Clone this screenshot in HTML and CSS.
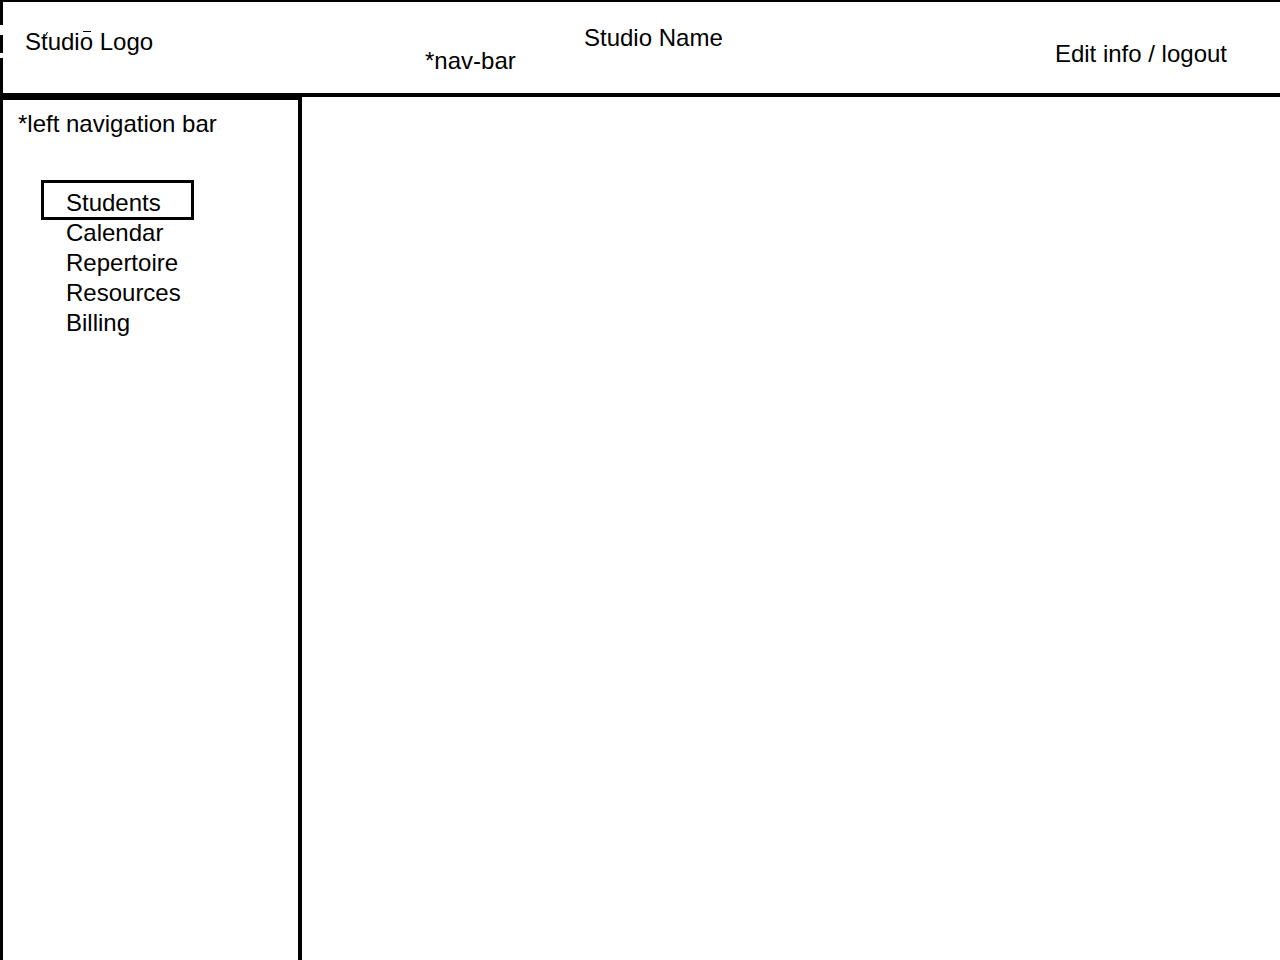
FILE: index.html
```html
<!DOCTYPE html>
<html lang="en">
<head>
    <meta charset="UTF-8">
    <meta name="viewport" content="width=device-width, initial-scale=1.0">
    <title>Studio Dashboard</title>
    <link rel="stylesheet" href="styles.css">
</head>
<body>
    <div class="header">
        <div class="logo">Studio Logo</div>
        <div class="nav-bar">
            <span class="nav-label">*nav-bar</span>
            <span class="studio-name">Studio Name</span>
        </div>
        <div class="account">Edit info / logout</div>
    </div>

    <div class="main">
        <div class="sidebar">
            <div class="sidebar-title">*left navigation bar</div>
            <ul class="side-nav">
                <li class="active">Students</li>
                <li>Calendar</li>
                <li>Repertoire</li>
                <li>Resources</li>
                <li>Billing</li>
            </ul>
        </div>
        <div class="content"></div>
    </div>
</body>
</html>
```

FILE: styles.css
```css
*, *::before, *::after {
    box-sizing: border-box;
}

body {
    margin: 0;
    height: 100vh;
    display: flex;
    flex-direction: column;
    background-color: #fff;
    color: #000;
    font-family: "Liberation Sans", Arial, sans-serif;
    font-size: 24px;
    line-height: 30px;
    overflow: hidden;
}

.header {
    height: 97px;
    flex-shrink: 0;
    display: flex;
    align-items: flex-start;
    border-top: 2px solid #000;
    border-bottom: 4px solid #000;
    /* broken left edge of the frame */
    background: linear-gradient(to bottom, #000 0 25px, transparent 25px 35px, #000 35px 53px, transparent 53px 58px, #000 58px) left top / 3px 100% no-repeat;
    background-origin: border-box;
}

.logo {
    position: relative;
    margin-top: 25px;
    padding-left: 25px;
    width: 425px;
}

/* stray marks left on the logo text */
.logo::before {
    content: "";
    position: absolute;
    left: 46px;
    top: 5px;
    width: 1px;
    height: 4px;
    background: #000;
    transform: skewX(-25deg);
}

.logo::after {
    content: "";
    position: absolute;
    left: 83px;
    top: 4px;
    width: 8px;
    height: 1px;
    background: #000;
}

.nav-bar {
    display: flex;
    align-items: flex-start;
    flex: 1;
}

.nav-label {
    margin-top: 44px;
    width: 159px;
}

.studio-name {
    margin-top: 21px;
}

.account {
    margin-top: 37px;
    padding-right: 53px;
}

.main {
    flex: 1;
    display: flex;
}

.sidebar {
    width: 302px;
    border-top: 3px solid #000;
    border-left: 3px solid #000;
    border-right: 4px solid #000;
    padding: 9px 0 0 15px;
}

.side-nav {
    list-style: none;
    margin: 49px 0 0;
    padding: 0 0 0 48px;
}

.side-nav li {
    position: relative;
}

.side-nav li.active::before {
    content: "";
    position: absolute;
    left: -25px;
    top: -8px;
    width: 153px;
    height: 40px;
    border: 3px solid #000;
}

.content {
    flex: 1;
}
```
